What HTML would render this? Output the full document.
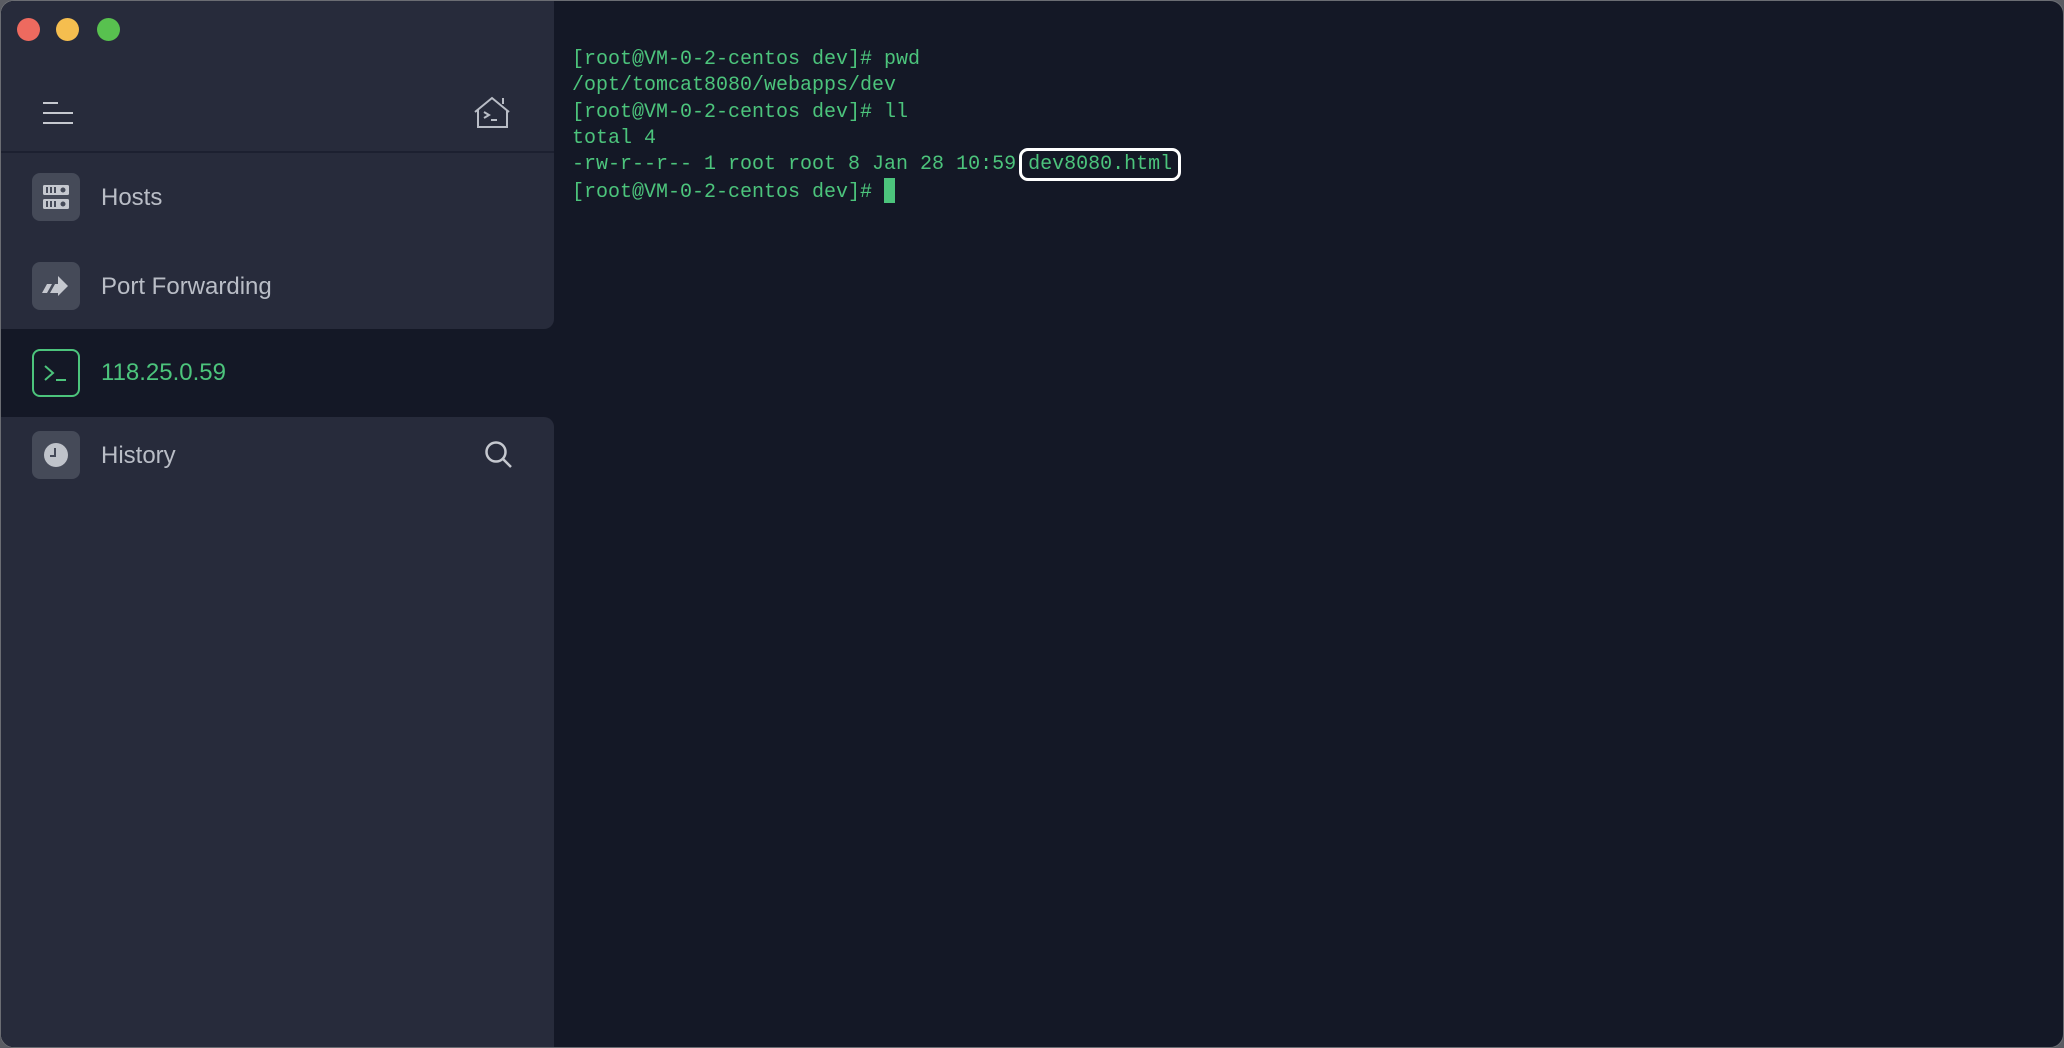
<!DOCTYPE html>
<html><head><meta charset="utf-8"><style>
*{margin:0;padding:0;box-sizing:border-box}
body{width:2064px;height:1048px;background:#5a5c63;overflow:hidden;font-family:"Liberation Sans",sans-serif}
.win{position:absolute;left:0;top:0;width:2064px;height:1048px;border-radius:14px;overflow:hidden;background:#141826;border:1px solid #6b6d73}
.side{position:absolute;left:0;top:0;width:553px;height:1048px;background:#141826}
.top{position:absolute;left:0;top:0;width:553px;height:328px;background:#272b3b;border-bottom-right-radius:10px}
.bot{position:absolute;left:0;top:416px;width:553px;height:640px;background:#272b3b;border-top-right-radius:10px}
.dot{position:absolute;top:17px;width:23px;height:23px;border-radius:50%}
.div{position:absolute;left:0;top:150px;width:553px;height:2px;background:#1c2030}
.ic{position:absolute;left:31px;width:48px;height:48px;border-radius:8px;background:#454a58;display:flex;align-items:center;justify-content:center}
.lbl{position:absolute;left:100px;font-size:24px;color:#b9bdc6;line-height:28px}
.term{position:absolute;left:571px;top:46px;font-family:"Liberation Mono",monospace;font-size:20px;line-height:26.3px;color:#4cc47c;white-space:pre}
</style></head><body><div class="win">
<div class="side">
<div class="top"></div>
<div class="bot"></div>
<div class="dot" style="left:16px;background:#ee6a5f"></div>
<div class="dot" style="left:55px;background:#f5be4f"></div>
<div class="dot" style="left:96px;background:#58c14f"></div>
<svg style="position:absolute;left:42px;top:100px" width="32" height="24"><g stroke="#c5c8cf" stroke-width="2"><line x1="0" y1="2" x2="15" y2="2"/><line x1="0" y1="12" x2="30" y2="12"/><line x1="0" y1="22" x2="30" y2="22"/></g></svg>
<svg style="position:absolute;left:472px;top:94px" width="42" height="36" viewBox="0 0 42 36"><g fill="none" stroke="#b9bdc6" stroke-width="2"><path d="M2 17 L19 3 L36 17"/><path d="M5 15 V32 H34 V15"/><path d="M30 9 V3"/><path d="M11 17 L16 20 L11 23"/><path d="M18 25 H24"/></g></svg>
<div class="div"></div>
<div class="ic" style="top:172px"><svg width="28" height="28"><rect x="1" y="2" width="26" height="10" rx="1.5" fill="#c5c8cf"/><rect x="1" y="16" width="26" height="10" rx="1.5" fill="#c5c8cf"/><g stroke="#454a58" stroke-width="2"><path d="M5 4v6M9 4v6M13 4v6M5 18v6M9 18v6M13 18v6"/></g><circle cx="21" cy="7" r="2.5" fill="#454a58"/><circle cx="21" cy="21" r="2.5" fill="#454a58"/></svg></div>
<div class="lbl" style="top:183px">Hosts</div>
<div class="ic" style="top:261px"><svg width="30" height="26"><path d="M1 20 L6 11 H11 L6 20Z" fill="#c5c8cf"/><path d="M9 20 L14 11 H17 V3 L27 13 L17 23 V20Z" fill="#c5c8cf"/></svg></div>
<div class="lbl" style="top:272px">Port Forwarding</div>
<div class="ic" style="top:348px;background:none;border:2px solid #4cc47c"><svg width="26" height="20"><path d="M2 3 L10 10 L2 17" fill="none" stroke="#4cc47c" stroke-width="2"/><path d="M13 17 H23" stroke="#4cc47c" stroke-width="2"/></svg></div>
<div class="lbl" style="top:358px;color:#4cc47c">118.25.0.59</div>
<div class="ic" style="top:430px"><svg width="26" height="26"><circle cx="13" cy="13" r="12" fill="#bfc3ca"/><path d="M12 6 V14 H7" stroke="#454a58" stroke-width="2" fill="none"/></svg></div>
<div class="lbl" style="top:441px">History</div>
<svg style="position:absolute;left:483px;top:439px" width="30" height="30"><circle cx="12" cy="12" r="9.5" fill="none" stroke="#c5c8cf" stroke-width="2.5"/><path d="M19 19 L27 27" stroke="#c5c8cf" stroke-width="2.5"/></svg>
</div>
<div class="term">[root@VM-0-2-centos dev]# pwd
/opt/tomcat8080/webapps/dev
[root@VM-0-2-centos dev]# ll
total 4
-rw-r--r-- 1 root root 8 Jan 28 10:59 dev8080.html
[root@VM-0-2-centos dev]# <span style="display:inline-block;width:11px;height:25px;background:#4cc47c;vertical-align:-6px"></span></div>
<div style="position:absolute;left:1018px;top:147px;width:162px;height:33px;border:3px solid #fff;border-radius:9px"></div>
</div></body></html>
